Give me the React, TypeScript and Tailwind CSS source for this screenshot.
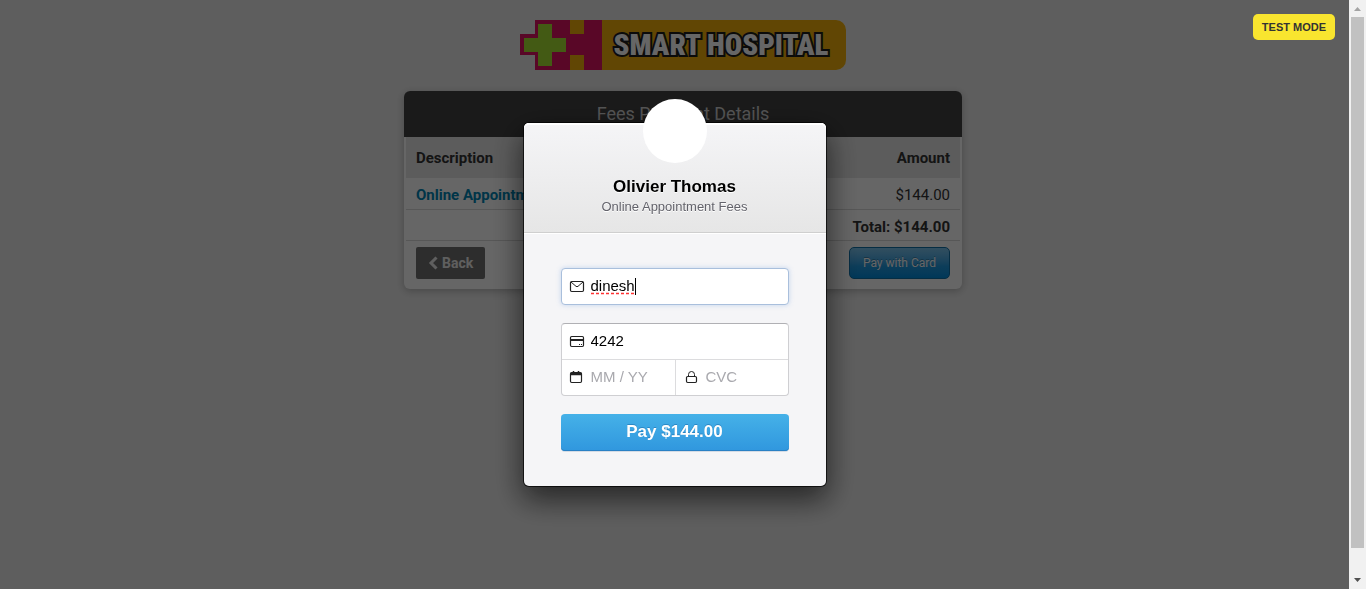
import React from "react";

const arial = "font-['Liberation_Sans',Arial,sans-serif]";

function Logo() {
  return (
    <div className="flex h-[50px] overflow-hidden" role="img" aria-label="Smart Hospital">
      <svg width="82" height="50" viewBox="0 0 82 50" aria-hidden="true" className="shrink-0">
        <path d="M15 0H82V50H15V35H0V14H15Z" fill="#de1263" />
        <path d="M50 0H64V14H50ZM50 35H64V50H50Z" fill="#f2b00a" />
        <path d="M18 4H32V18H46V32H32V46H18V32H4V18H18Z" fill="#a9e234" />
      </svg>
      <div className="flex items-center rounded-r-[10px] bg-[#f2b00a] pr-[18px] pl-3">
        <span className="font-['Roboto_Condensed','Liberation_Sans',sans-serif] text-[29px] leading-[50px] font-black whitespace-nowrap text-white [-webkit-text-stroke:4px_#1c1c1c] [paint-order:stroke_fill]">
          SMART HOSPITAL
        </span>
      </div>
    </div>
  );
}

function FeesCard() {
  return (
    <section className="w-full max-w-[558px] overflow-hidden rounded-md bg-white text-[15px] text-[#333] shadow-[0_2px_8px_rgba(0,0,0,0.25)]">
      <h1 className="bg-[#424242] text-center text-lg leading-[46px] text-[#d4d4d4]">Fees Payment Details</h1>
      <div className="px-0.5 pb-2.5">
        <table className="w-full border-collapse">
          <thead>
            <tr className="h-[41px] bg-[#e6e6e6]">
              <th className="px-2.5 pt-0.5 text-left font-bold">Description</th>
              <th className="px-2.5 pt-0.5 text-right font-bold">Amount</th>
            </tr>
          </thead>
          <tbody>
            <tr className="h-[31px] border-b border-[#d9d9d9]">
              <td className="px-2.5 pt-1 font-bold text-[#0084b4]">Online Appointment Fees</td>
              <td className="px-2.5 pt-1 text-right">$144.00</td>
            </tr>
            <tr className="h-[31px] border-b border-[#d9d9d9]">
              <td />
              <td className="px-2.5 pt-1.5 text-right font-bold">Total: $144.00</td>
            </tr>
          </tbody>
        </table>
        <div className="flex items-center justify-between px-2.5 pt-1.5">
          <button className="flex h-8 items-center gap-1 rounded-xs bg-[#727272] px-3 text-sm font-bold text-[#eee]">
            <svg width="10" height="14" viewBox="0 0 10 14" aria-hidden="true">
              <path d="M8.5 1.5 3 7 8.5 12.5" fill="none" stroke="currentColor" strokeWidth="3" />
            </svg>
            Back
          </button>
          <button className="h-8 rounded-[5px] border border-[#1071a8] bg-linear-to-b from-[#7dc5ee] via-[#209ae0] via-60% to-[#008cdd] px-[13px] text-xs font-normal text-white [text-shadow:0_-1px_0_rgba(0,0,0,0.25)]">
            Pay with Card
          </button>
        </div>
      </div>
    </section>
  );
}

const iconProps = {
  width: 16,
  height: 14,
  viewBox: "0 1 16 14",
  fill: "none",
  stroke: "#222",
  "aria-hidden": true,
  className: "pointer-events-none mr-1.5 ml-[7px] shrink-0",
} as const;

function MailIcon() {
  return (
    <svg {...iconProps}>
      <rect x="1.5" y="2.5" width="13" height="10" rx="1.2" strokeWidth="1.2" />
      <path d="M2 3 7 7.3Q8 8.1 9 7.3L14 3" />
    </svg>
  );
}

function CardIcon() {
  return (
    <svg {...iconProps}>
      <rect x="1.5" y="2.5" width="13" height="10" rx="1.2" strokeWidth="1.2" />
      <path d="M1.5 6H14.5" strokeWidth="2" />
      <path d="M10 10.5H11M12 10.5H13" />
    </svg>
  );
}

function CalendarIcon() {
  return (
    <svg {...iconProps}>
      <rect x="1.5" y="2.5" width="11" height="10" rx="1.2" strokeWidth="1.2" />
      <path d="M1.5 4H12.5" strokeWidth="2.5" />
      <path d="M4.5 1V3M9.5 1V3" strokeWidth="1.5" />
    </svg>
  );
}

function LockIcon() {
  return (
    <svg {...iconProps}>
      <rect x="2.5" y="6.5" width="10" height="6" rx="1.2" strokeWidth="1.2" />
      <path d="M4.5 6V4.5A3 3 0 0 1 10.5 4.5V6" />
    </svg>
  );
}

const inputClass = "h-full w-full min-w-0 bg-transparent pb-0.5 text-[15px] text-black outline-none placeholder:text-[#a9a9ae]";

function CheckoutDialog() {
  return (
    <div
      role="dialog"
      aria-labelledby="merchant"
      className={`${arial} w-[302px] rounded-[5px] bg-[#f5f5f7] shadow-[0_0_0_1px_rgba(0,0,0,0.7),0_12px_30px_2px_rgba(0,0,0,0.6)]`}
    >
      <header className="relative rounded-t-[5px] border-b border-[#cfcfcf] bg-linear-to-b from-[#f5f5f7] to-[#e6e6e6] pt-[54px] pb-[15px] text-center shadow-[inset_0_2px_0_#fff,0_1px_0_#fff]">
        <div className="absolute -top-6 left-1/2 size-16 -translate-x-1/2 rounded-full bg-white" />
        <h2 id="merchant" className="text-[17px] leading-5 font-bold text-black [text-shadow:0_1px_0_#fff]">
          Olivier Thomas
        </h2>
        <p className="text-[13px] leading-5 text-[#63636b] [text-shadow:0_1px_0_#fff]">Online Appointment Fees</p>
      </header>
      <form className="px-[37px] pt-[35px] pb-[35px]" onSubmit={(e) => e.preventDefault()}>
        <div className="relative flex h-[37px] items-center rounded-[4px] border border-[#a9bfdc] bg-white shadow-[0_0_5px_rgba(100,150,220,0.35)]">
          <MailIcon />
          <input aria-label="Email" defaultValue="dinesh" spellCheck={false} className={inputClass} />
          <svg width="46" height="20" aria-hidden="true" className="pointer-events-none absolute top-2 left-7">
            <path d="M1 16.5H45" stroke="#f33" strokeWidth="1.5" strokeDasharray="3 2" />
            <path d="M45.5 1V18" stroke="#000" />
          </svg>
        </div>
        <div className="mt-[18px] rounded-[4px] border border-[#cfcfd2] border-t-[#b0b0b4] bg-white">
          <div className="flex h-9 items-center border-b border-[#dcdcde]">
            <CardIcon />
            <input aria-label="Card number" defaultValue="4242" className={inputClass} />
          </div>
          <div className="grid h-[35px] grid-cols-2">
            <div className="flex min-w-0 items-center">
              <CalendarIcon />
              <input aria-label="Expiry date" placeholder="MM / YY" className={inputClass} />
            </div>
            <div className="flex min-w-0 items-center border-l border-[#dcdcde] pl-px">
              <LockIcon />
              <input aria-label="CVC" placeholder="CVC" className={inputClass} />
            </div>
          </div>
        </div>
        <button className="mt-[18px] block h-[37px] w-full rounded-[4px] bg-linear-to-b from-[#45b1e8] to-[#3097de] pb-0.5 text-[17px] font-bold text-white shadow-[inset_0_-1px_0_#2980c4,0_1px_0_#d5dbe4] [text-shadow:0_-1px_0_rgba(0,60,120,0.3)]">
          Pay $144.00
        </button>
      </form>
    </div>
  );
}

function Scrollbar() {
  return (
    <div aria-hidden="true" className="flex w-[17px] shrink-0 flex-col items-center bg-[#f1f1f1]">
      <svg width="17" height="17" viewBox="0 0 17 17" className="shrink-0">
        <path d="M5 11H12L8.5 7Z" fill="#a3a3a3" />
      </svg>
      <div className="w-[13px] flex-1 bg-[#c1c1c1]" />
      <div className="h-6 shrink-0" />
      <svg width="17" height="17" viewBox="0 0 17 17" className="shrink-0">
        <path d="M5 6H12L8.5 10Z" fill="#505050" />
      </svg>
    </div>
  );
}

export default function App() {
  return (
    <div className="relative min-h-screen bg-[#ececec] font-[Roboto,sans-serif]">
      <main className="flex flex-col items-center gap-[21px] px-4 py-5">
        <Logo />
        <FeesCard />
      </main>
      <div className="fixed inset-0 flex">
        <div className="relative flex flex-1 items-start justify-center bg-black/60 pt-[123px]">
          <CheckoutDialog />
          <span
            className={`${arial} absolute top-3.5 right-3.5 rounded-[5px] bg-[#f9e52f] px-[9px] text-[11px] leading-[26px] font-bold text-[#333]`}
          >
            TEST MODE
          </span>
        </div>
        <Scrollbar />
      </div>
    </div>
  );
}
